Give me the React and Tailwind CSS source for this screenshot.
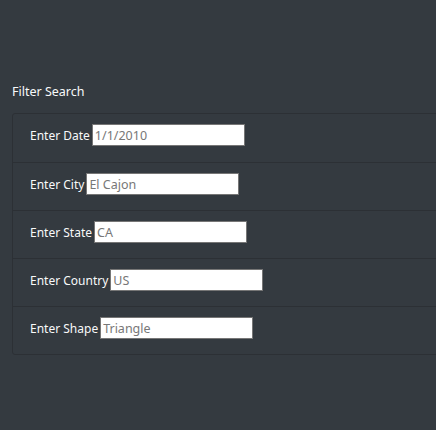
import { useState } from 'react'

const fields = [
  { label: 'Enter Date', value: '1/1/2010' },
  { label: 'Enter City', value: 'El Cajon' },
  { label: 'Enter State', value: 'CA' },
  { label: 'Enter Country', value: 'US' },
  { label: 'Enter Shape', value: 'Triangle' },
]

export default function App() {
  const [values, setValues] = useState(fields.map(f => f.value))

  return (
    <div className="min-h-[430px] w-[436px] overflow-hidden bg-[#343a40] text-[#f8f9fa] font-['Noto_Sans',sans-serif] text-[12px]">
      <div className="pt-[82px] pl-[12px]">
        <h5 className="h-[20px] leading-[20px] text-[12.5px]">Filter Search</h5>
        <ul className="mt-[11px] w-[440px] rounded-tl-[3px] rounded-bl-[3px] border border-[#2c3035]">
          {fields.map((f, i) => (
            <li
              key={f.label}
              className={`flex h-[48px] items-start pt-[10px] pl-[17px] ${i > 0 ? 'border-t border-[#2c3035]' : ''}`}
            >
              <div className="flex h-[22px] items-baseline">
                <label className="mr-[2px] whitespace-nowrap">{f.label}</label>
                <input
                  type="text"
                  value={values[i]}
                  onChange={e => {
                    const next = [...values]
                    next[i] = e.target.value
                    setValues(next)
                  }}
                  className="h-[22px] w-[153px] border border-[#767676] bg-white px-[2px] text-[12.5px] text-[#777] outline-none"
                />
              </div>
            </li>
          ))}
        </ul>
      </div>
    </div>
  )
}
